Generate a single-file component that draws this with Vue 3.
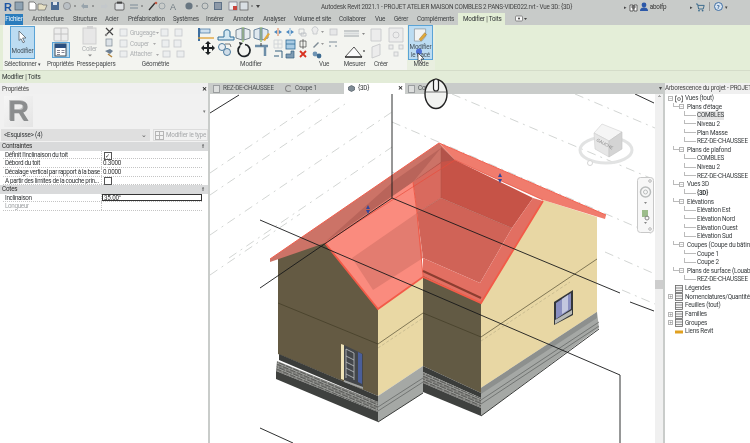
<template>
  <div class="app">
    <!-- Title bar -->
    <div class="titlebar">
      <svg class="qat" width="270" height="13" viewBox="0 0 270 13">
        <text x="4" y="10.500" class="logo">R</text>
        <rect x="15" y="2" width="8" height="8" fill="#8fa3b3" stroke="#4c5a66" stroke-width=".7" />
        <path d="M29 2h5l2 2v6h-7z" fill="#fff" stroke="#555" stroke-width=".7" />
        <path d="M38 4h4l1 1h4l-2 5h-7z" fill="#e6e0c4" stroke="#666" stroke-width=".7" />
        <rect x="51" y="2" width="8" height="8" fill="#4a6a92" />
        <rect x="53" y="2" width="4" height="3" fill="#dfe6ee" />
        <circle cx="67" cy="6" r="3.600" fill="#b9bfc4" stroke="#777" stroke-width=".6" />
        <circle cx="75" cy="6" r=".8" fill="#555" />
        <path d="M81 6l3-3v2h4v3h-4v1z" fill="#98a4ac" />
        <path d="M108 6l-3-3v2h-4v3h4v1z" fill="#c4c8cb" />
        <circle cx="93" cy="6" r=".8" fill="#555" />
        <rect x="115" y="3" width="9" height="7" rx="1" fill="#dfe2e4" stroke="#444" stroke-width=".8" />
        <rect x="117" y="1.600" width="5" height="2" fill="#444" />
        <path d="M130 5h8M130 8h8" stroke="#7d8c98" stroke-width="1.200" />
        <circle cx="142" cy="6" r=".8" fill="#555" />
        <path d="M149 10l6-7" stroke="#333" stroke-width="1.300" />
        <circle cx="156" cy="3" r="1.300" fill="#c25a45" />
        <circle cx="162" cy="6" r="3" fill="none" stroke="#9aa3a8" />
        <text x="170" y="10" class="a-glyph">A</text>
        <circle cx="189" cy="6" r="3.600" fill="#687681" />
        <circle cx="197" cy="6" r=".8" fill="#555" />
        <circle cx="205" cy="6" r="3" fill="none" stroke="#8b9499" />
        <rect x="214" y="2" width="8" height="8" fill="#5e7187" />
        <path d="M215 4h6M215 6h6M215 8h6" stroke="#e5e5e5" stroke-width=".7" />
        <rect x="229" y="2" width="8" height="8" fill="#edf0f2" stroke="#667" stroke-width=".6" />
        <rect x="233" y="6" width="4" height="4" fill="#c9453c" />
        <rect x="240" y="2" width="8" height="8" fill="#d9dfe4" stroke="#555" stroke-width=".7" />
        <circle cx="252" cy="6" r=".8" fill="#555" />
        <path d="M256 5h4l-2 3z" fill="#444" />
      </svg>
      <span class="doc-title">Autodesk Revit 2021.1 - PROJET ATELIER MAISON COMBLES 2 PANS-VIDE022.rvt - Vue 3D: {3D}</span>
      <div class="account">
        <span class="dot-arrow">▸</span>
        <svg width="9" height="10" viewBox="0 0 9 10"><path d="M1 3h3v6H1zM5 3h3v6H5zM3 4h3v2H3z" fill="#fff" stroke="#444" stroke-width=".8" /></svg>
        <svg width="8" height="10" viewBox="0 0 8 10"><circle cx="4" cy="3" r="2.400" fill="#2c58a8" /><path d="M0 9c0-3 2-3.600 4-3.600S8 6 8 9z" fill="#2c58a8" /></svg>
        <span class="user">abolfp</span>
        <span class="dot-arrow">▸</span>
        <svg width="10" height="10" viewBox="0 0 10 10"><path d="M1 2h1.600l1 5h4.600l1-3.600H3" fill="none" stroke="#3f6d8e" stroke-width="1" /><circle cx="4" cy="8.600" r=".9" fill="#3f6d8e" /><circle cx="7.600" cy="8.600" r=".9" fill="#3f6d8e" /></svg>
        <span class="sep"></span>
        <span class="help">?</span>
        <span class="dot-arrow">▾</span>
      </div>
    </div>

    <!-- Ribbon tabs -->
    <div class="tabs">
      <div
        v-for="tab in ribbonTabs"
        :key="tab.label"
        :class="['tab', tab.cls]"
        :style="{ width: tab.w + 'px' }"
      >{{ tab.label }}</div>
      <svg class="tab-extra" width="12" height="8" viewBox="0 0 12 8"><rect x="0.5" y="1" width="7" height="5" rx="1" fill="#f6f6f6" stroke="#666" stroke-width=".7" /><circle cx="4" cy="3.500" r="1" fill="#444" /><path d="M9 3h3l-1.500 2z" fill="#444" /></svg>
    </div>

    <!-- Ribbon -->
    <div class="ribbon">
      <div class="group g-select">
        <div class="group-body">
          <div class="big-active select-btn">
            <svg width="12" height="14" viewBox="0 0 12 14"><path d="M2 1l7 7H5.600l2 4-1.600.8-2-4L2 10.500z" fill="#fff" stroke="#55606a" stroke-width=".8" /></svg>
            <span>Modifier</span>
          </div>
        </div>
        <div class="group-label">Sélectionner <small>▾</small></div>
      </div>
      <div class="group g-props">
        <div class="group-body props-body">
          <svg width="16" height="15" viewBox="0 0 16 15"><rect x="1" y="1" width="14" height="13" rx="1" fill="#ededed" stroke="#c2c2c2" /><path d="M1 7h14M8 1v13" stroke="#c2c2c2" /></svg>
          <div class="props-active">
            <svg width="13" height="14" viewBox="0 0 13 14"><rect x="1" y="1" width="11" height="12" fill="#fff" stroke="#3c4a56" /><rect x="1" y="1" width="11" height="4" fill="#2a4f80" /><path d="M3 7.500h3M3 9.500h3M3 11.500h3M7.500 7.500h3M7.500 9.500h3" stroke="#667" stroke-width=".8" /></svg>
          </div>
        </div>
        <div class="group-label">Propriétés</div>
      </div>
      <div class="group g-clip">
        <div class="group-body">
          <svg width="42" height="35" viewBox="75 25 42 35">
            <rect x="83" y="28" width="13" height="16" fill="#e7e7e7" stroke="#cfcfcf" />
            <rect x="87" y="26" width="6" height="3" fill="#d3d3d3" />
            <text x="82" y="50.500" class="dim">Coller</text>
            <path d="M88 54.500h4l-2 2z" fill="#888" />
            <path d="M106 28l7 7M113 28l-7 7" stroke="#444" stroke-width="1.200" />
            <circle cx="106" cy="35" r="1.200" fill="#8a8a8a" />
            <rect x="106" y="39" width="6" height="7" fill="#dde3e8" stroke="#7b8792" stroke-width=".7" />
            <path d="M105 51l5 3 3-3-3-2z" fill="#6c7f93" />
            <path d="M108 54l4 3" stroke="#b5873f" stroke-width="1.500" />
          </svg>
        </div>
        <div class="group-label">Presse-papiers</div>
      </div>
      <div class="group g-geo">
        <div class="group-body">
          <svg width="77" height="35" viewBox="117 25 77 35">
            <g stroke="#c5c9cc" fill="#eceeef" stroke-width=".8">
              <rect x="120" y="29" width="7" height="7" />
              <rect x="120" y="40" width="7" height="7" />
              <rect x="120" y="51" width="7" height="6" />
              <rect x="161" y="29" width="7" height="7" />
              <rect x="175" y="29" width="7" height="7" />
              <rect x="162" y="40" width="7" height="7" />
              <rect x="174" y="40" width="7" height="7" />
              <rect x="163" y="51" width="7" height="6" />
              <rect x="177" y="51" width="7" height="6" />
            </g>
            <text x="130" y="35" class="dim">Grugeage</text>
            <text x="130" y="45.500" class="dim">Couper</text>
            <text x="130" y="56" class="dim">Attacher</text>
            <path d="M156 32h3l-1.500 2zM153 43h3l-1.500 2zM156 54h3l-1.500 2z" fill="#aaa" />
          </svg>
        </div>
        <div class="group-label">Géométrie</div>
      </div>
      <div class="group g-mod">
        <div class="group-body">
          <svg width="114" height="35" viewBox="194 25 114 35">
            <!-- big row 1 -->
            <path d="M198 28h2v13h-2z" fill="#3f6f9f" />
            <rect x="200" y="29" width="10" height="4" fill="#cfe0ee" stroke="#3f6f9f" stroke-width=".7" />
            <path d="M198 38h16" stroke="#e0a030" stroke-width="1.300" />
            <path d="M218 40h16v-3h-4v-5c0-3-6-3-6 0v5h-6z" fill="#d5e8f2" stroke="#2f6c98" stroke-width="1" />
            <path d="M243 27v15" stroke="#6aa63e" stroke-width="1" />
            <path d="M236 30l6-2v12l-6-2zM244 28l6 2v8l-6 2z" fill="#e5ebef" stroke="#5d6f7d" stroke-width=".8" />
            <path d="M261 27v15" stroke="#6aa63e" stroke-width="1" />
            <path d="M254 30l6-2v12l-6-2zM262 28l6 2v8l-6 2z" fill="#dfe8ef" stroke="#4d6c8a" stroke-width=".8" />
            <path d="M263 40l5-7 2 1-5 7z" fill="#e4a93a" />
            <!-- big row 2 -->
            <path d="M205 44l3-3 3 3h-2v3h3v-2l3 3-3 3v-2h-3v3h2l-3 3-3-3h2v-3h-3v2l-3-3 3-3v2h3v-3z" fill="#1d2124" />
            <circle cx="222" cy="47" r="3.500" fill="#e8eef2" stroke="#3b6e95" stroke-width=".9" />
            <circle cx="227" cy="52" r="3.500" fill="#cfdde8" stroke="#3b6e95" stroke-width=".9" />
            <path d="M225 44h5l1 3" fill="none" stroke="#444" stroke-width=".7" />
            <path d="M245 44.500a6 6 0 1 1-5 1.500" fill="none" stroke="#1e2326" stroke-width="1.700" />
            <path d="M239 42l4 1-3 3z" fill="#1e2326" />
            <path d="M255 46h13M265 46v10" stroke="#6d8ea8" stroke-width="2.500" />
            <path d="M261 43v3" stroke="#555" stroke-width="1.200" />
            <!-- small -->
            <path d="M274 32l3-2v4zM282 32l-3-2v4z" fill="#4c8ac0" />
            <path d="M278 28v8" stroke="#d5652e" stroke-width=".8" />
            <path d="M286 32l3-2v4zM294 32l-3-2v4z" fill="#4c8ac0" />
            <path d="M290 28v8" stroke="#5b9bd0" stroke-width=".8" />
            <path d="M299 29h5v5h-5zM301 33h5v3h-5z" fill="none" stroke="#b8bdc1" stroke-width=".8" />
            <path d="M274 40h8v8h-8zM274 44h8M278 40v8" fill="none" stroke="#cfd3d6" stroke-width=".9" />
            <rect x="286" y="40" width="9" height="9" fill="#a9cbe3" stroke="#2f6c98" stroke-width=".8" />
            <path d="M286 44h9" stroke="#2f6c98" stroke-width=".8" />
            <path d="M300 41h6v6h-6zM303 39v10" fill="none" stroke="#444" stroke-width=".7" />
            <path d="M275 51h7v7M274 56h5" fill="none" stroke="#35607f" stroke-width="1" />
            <path d="M286 58h8v-7h-3v3h-5z" fill="#7d9ab2" stroke="#35607f" stroke-width=".7" />
            <path d="M300 51l6 6M306 51l-6 6" stroke="#d8311f" stroke-width="1.800" />
          </svg>
        </div>
        <div class="group-label">Modifier</div>
      </div>
      <div class="group g-vue">
        <div class="group-body">
          <svg width="32" height="35" viewBox="308 25 32 35">
            <path d="M313 32a3 3 0 1 1 4 0v2h-4z" fill="#ececec" stroke="#c2c5c8" stroke-width=".8" />
            <path d="M321 31h3l-1.500 2z" fill="#999" />
            <rect x="330" y="29" width="7" height="6" fill="#e6e7e8" stroke="#c3c6c8" stroke-width=".8" />
            <path d="M313 47l5-5 1 1-5 5z" fill="#7f8b95" />
            <path d="M321 43h3l-1.500 2z" fill="#999" />
            <path d="M329 42h8M330 45v2M336 45v2" stroke="#7d8c99" stroke-width="1" />
            <circle cx="315" cy="54" r="2.400" fill="#6e93b3" />
            <circle cx="319" cy="56" r="2.400" fill="#3c6a90" />
          </svg>
        </div>
        <div class="group-label">Vue</div>
      </div>
      <div class="group g-measure">
        <div class="group-body">
          <svg width="29" height="35" viewBox="340 25 29 35">
            <path d="M344 31h15M344 36h15" stroke="#9ca3a8" stroke-width="1" />
            <rect x="344" y="32.500" width="15" height="2" fill="#d6d9db" />
            <path d="M362 33h3l-1.500 2z" fill="#888" />
            <path d="M345 57l9-10 8 10z" fill="#fbfbfb" stroke="#444" stroke-width=".9" />
            <path d="M345 57h17" stroke="#222" stroke-width="1.200" />
            <circle cx="364" cy="51" r=".9" fill="#555" />
          </svg>
        </div>
        <div class="group-label">Mesurer</div>
      </div>
      <div class="group g-create">
        <div class="group-body">
          <svg width="38" height="35" viewBox="369 25 38 35">
            <g fill="#ececec" stroke="#c8cacc" stroke-width=".9">
              <path d="M371 29h10v12h-10z" />
              <path d="M389 28h14v14h-14z" />
              <circle cx="396" cy="35" r="3" />
              <path d="M372 47l8-3v11l-8 3z" />
              <rect x="389" y="45" width="4" height="4" />
              <rect x="399" y="45" width="4" height="4" />
              <rect x="394" y="52" width="4" height="4" />
            </g>
          </svg>
        </div>
        <div class="group-label">Créer</div>
      </div>
      <div class="group g-mode">
        <div class="group-body">
          <div class="big-active mode-btn">
            <svg width="15" height="15" viewBox="0 0 15 15"><path d="M1 1h12v8l-4 5H1z" fill="#f1f3f4" stroke="#8e969c" stroke-width=".8" /><path d="M6 12l6-7 2 2-6 7z" fill="#e0a838" stroke="#7c5a1e" stroke-width=".4" /></svg>
            <span>Modifier<br />le tracé</span>
          </div>
        </div>
        <div class="group-label">Mode</div>
      </div>
      <svg class="cursor" width="12" height="16" viewBox="0 0 12 16">
        <circle cx="4" cy="3.500" r="3" fill="#3d5fd0" opacity=".85" />
        <path d="M3 5l6 6H6l1.500 4-1.500.6L4.500 12 3 13.500z" fill="#fff" stroke="#333" stroke-width=".7" />
      </svg>
    </div>

    <div class="context-line">Modifier | Toits</div>

    <div class="main">
      <!-- Properties palette -->
      <div class="props">
        <div class="panel-title"><span>Propriétés</span><b>✕</b></div>
        <div class="type-box">
          <div class="type-logo">R</div>
          <span class="type-arrow">▾</span>
        </div>
        <div class="type-row">
          <div class="combo"><span>&lt;Esquisse&gt; (4)</span><span class="combo-arrow">⌄</span></div>
          <div class="edit-type">
            <svg width="9" height="9" viewBox="0 0 9 9"><rect x=".5" y=".5" width="8" height="8" fill="none" stroke="#b5b5b5" /><path d="M.5 4.500h8M4.500 .5v8" stroke="#b5b5b5" /></svg>
            <span>Modifier le type</span>
          </div>
        </div>
        <template v-for="sec in propSections" :key="sec.title">
          <div class="prop-section"><span>{{ sec.title }}</span><span class="collapse">⇑</span></div>
          <div v-for="row in sec.rows" :key="row.name" :class="['prop-row', { off: row.off }]">
            <div class="prop-name">{{ row.name }}</div>
            <div :class="['prop-val', { editing: row.editing }]">
              <span v-if="row.check !== undefined" class="check">{{ row.check ? '✓' : '' }}</span>
              <template v-else>{{ row.value }}</template>
            </div>
          </div>
        </template>
      </div>

      <!-- View area -->
      <div class="center">
        <div class="view-tabs">
          <div class="view-tab"><i class="doc-ico"></i>REZ-DE-CHAUSSEE</div>
          <div class="view-tab coupe"><i class="sec-ico"></i>Coupe 1</div>
          <div class="view-tab active">
            <svg width="7" height="7" viewBox="0 0 7 7"><path d="M3.500 .5l3 1.500v3l-3 1.500-3-1.500v-3z" fill="#7f8c96" stroke="#3f4a52" stroke-width=".6" /></svg>
            <span>{3D}</span><b>✕</b>
          </div>
          <div class="view-tab"><i class="doc-ico"></i>Coupe 2</div>
          <div class="tabs-end">▾</div>
        </div>
        <div class="view-row">
          <svg class="canvas" width="445" height="349" viewBox="210 94 445 349">
            <defs>
              <pattern id="brick" width="7" height="5" patternUnits="userSpaceOnUse" patternTransform="skewY(23)">
                <rect width="7" height="5" fill="#5b5c59" />
                <path d="M0 .5h7M0 3h7M2 .5V3M5.500 3V5" stroke="#c9cac6" stroke-width=".55" fill="none" />
              </pattern>
            </defs>

            <!-- reference planes -->
            <g class="grid">
              <path d="M210 173L320 99" />
              <path d="M210 195L345 104" />
              <path d="M210 235L392 112" />
              <path d="M229 258L392 147" />
              <path d="M392 122L655 235" />
              <path d="M392 172L440 192" />
              <path d="M452 94L655 180" />
              <path d="M575 94L655 128" />
              <path d="M210 275L300 214" />
              <path d="M605 252L655 274" />
              <path d="M622 290L655 304" />
            </g>

            <!-- left wall -->
            <polygon points="278,258 325,242 378,309 378,345 378,396 278,354" fill="#645a43" />
            <!-- middle wall -->
            <polygon points="378,309 423,278 423,366 378,396" fill="#e9d8a4" />
            <!-- rear wall -->
            <polygon points="423,272 481,302 481,393 423,366" fill="#625a44" />
            <!-- right wall -->
            <polygon points="481,302 543,200 597,217 597,312 481,388" fill="#e8d7a4" />

            <!-- plinth, gable side -->
            <polygon points="279,354 378,396 378,402 279,360" fill="#3a3c3a" />
            <polygon points="277,361 378,402 378,412 276,371" fill="url(#brick)" />
            <polygon points="276,371 378,412 378,422 276,379" fill="#3f413f" />
            <polygon points="423,366 481,393 481,398 423,372" fill="#3a3c3a" />
            <polygon points="423,372 481,398 481,408 423,383" fill="url(#brick)" />
            <polygon points="423,383 481,408 481,416 423,392" fill="#3f413f" />
            <!-- plinth, light side -->
            <polygon points="378,396 423,366 423,393 378,422" fill="#a5a8a5" />
            <path d="M378 407L423 378M378 411L423 382" stroke="#5d605e" stroke-width=".7" />
            <polygon points="481,388 597,312 599,328 481,416" fill="#a5a8a5" />
            <polygon points="481,388 597,312 597,318 481,394" fill="#8d908e" />
            <path d="M481 400L599 322M481 404L599 326" stroke="#5d605e" stroke-width=".7" />
            <path d="M378 422L423 393M481 416L599 329" stroke="#3a3c3a" stroke-width="1" />

            <!-- level lines -->
            <g class="level">
              <path d="M278 303L378 344L423 313L481 337L597 259" />
            </g>
            <path d="M378 348L423 318M481 341L570 282" class="level-dash" />

            <!-- door -->
            <polygon points="341,344 344,345 344,380 341,379" fill="#efe3b8" />
            <polygon points="344,345 363,354 363,387 344,380" fill="#43464a" />
            <polygon points="358,352 362,354 362,384 358,382" fill="#4a5e9a" />
            <path d="M346 349l8 4v27M346 356l8 4M346 362l8 4M346 368l8 4M346 374l8 4M346 349v29" stroke="#cfd1d2" stroke-width=".7" fill="none" />
            <polygon points="344,380 363,387 363,389 344,382" fill="#a2a5a5" />

            <!-- window -->
            <polygon points="554,302 573,290 573,315 554,325" fill="#34373a" />
            <polygon points="556,303 571,293 571,309 556,319" fill="#8a8fc0" />
            <polygon points="562,299 568,295 568,310 562,314" fill="#c3c7df" />
            <polygon points="555,320 572,310 572,314 555,324" fill="#b7b9b6" />

            <!-- roof -->
            <polygon points="439,143 270,259 270,262 325,243 455,160" fill="#cc7367" />
            <polygon points="439,143 606,215 605,219 543,200 455,160" fill="#f07c6d" />
            <polygon points="441,148 395,180 325,242 413,182" fill="#b9645a" />
            <polygon points="441,147 455,160 414,181 441,162" fill="#b3534a" />
            <polygon points="441,162 455,160 533,198 512,228 441,198" fill="#c65347" />
            <polygon points="413,182 441,163 441,198 417,213" fill="#d96a5e" />
            <polygon points="441,198 512,228 480,283 423,258 417,213" fill="#d06357" />
            <polygon points="533,198 543,201 481,303 423,276 423,258 480,283 512,228" fill="#e26f62" />
            <polygon points="413,182 325,243 373,302 378,309 423,277 417,213" fill="#fa8b7e" />
            <polygon points="417,213 352,258 373,290 423,258" fill="#e37c70" />
            <path d="M325 243L378 309L423 277L481 303L543 201" fill="none" stroke="#f25b48" stroke-width="1.800" />
            <path d="M413 182L417 213L423 276" fill="none" stroke="#ee5a48" stroke-width="1" />
            <path d="M270 259L439 143L606 215" fill="none" stroke="#f0604f" stroke-width="1" />
            <path d="M325 243L455 160L543 200" fill="none" stroke="#e84c3b" stroke-width=".7" />
            <path d="M423 271L481 298" stroke="#8c3d30" stroke-width="2" />
            <path d="M441 148v50l71 30M441 198l-24 15" stroke="#a85449" stroke-width=".5" fill="none" />

            <!-- black scope lines -->
            <g class="scope">
              <path d="M392 94V198L620 293" />
              <path d="M260 288L392 198" />
              <path d="M260 220L620 375V443" />
              <path d="M210 113L239 95" />
              <path d="M635 94L654 103" />
              <path d="M630 302L654 311" />
              <path d="M260 428L293 443" />
            </g>

            <!-- shape handles -->
            <path d="M368 205l-2 4h4zM368 214l-2-4h4zM500 173l-2 4h4zM500 183l-2-4h4z" fill="#33469a" />

            <!-- view cube -->
            <ellipse cx="606" cy="150" rx="26" ry="13" fill="none" stroke="#e2e3e3" stroke-width="3" />
            <polygon points="602,124 622,132 609,141 594,133" fill="#f5f5f5" stroke="#d0d0d0" stroke-width=".6" />
            <polygon points="594,133 609,141 609,157 595,149" fill="#e6e6e6" stroke="#cfcfcf" stroke-width=".6" />
            <polygon points="609,141 622,132 622,149 609,157" fill="#d4d4d4" stroke="#c2c2c2" stroke-width=".6" />
            <text x="596" y="141" class="cube-text" transform="rotate(28 596 141)">GAUCHE</text>
            <circle cx="590" cy="163" r="2.500" fill="#fff" stroke="#d5d5d5" />

            <!-- nav bar -->
            <rect x="637.500" y="177.500" width="16" height="55" rx="3" fill="#f7f7f7" stroke="#c8c8c8" />
            <circle cx="645.500" cy="192" r="5" fill="none" stroke="#b9bcbc" stroke-width="1.500" />
            <circle cx="645.500" cy="192" r="2" fill="none" stroke="#b9bcbc" />
            <path d="M644 202h3l-1.500 2z" fill="#888" />
            <rect x="642" y="210" width="6" height="7" fill="#9dbd8c" />
            <circle cx="647" cy="218" r="2" fill="none" stroke="#8a8a8a" />
            <path d="M644 222h3l-1.500 2z" fill="#888" />
            <circle cx="650" cy="229" r="1.300" fill="none" stroke="#b8b8b8" />
            <circle cx="650" cy="181" r="1.300" fill="none" stroke="#b8b8b8" />
          </svg>
          <div class="scroll">
            <span class="scroll-up">⌃</span>
            <div class="scroll-thumb"></div>
          </div>
        </div>
      </div>

      <!-- Project browser -->
      <div class="browser">
        <div class="browser-title">Arborescence du projet - PROJET</div>
        <div class="tree">
          <div
            v-for="(node, i) in treeNodes"
            :key="i"
            :class="['node', 'lvl' + node.lvl, { sel: node.sel, bold: node.bold }]"
          >
            <i v-if="node.box" class="box">{{ node.box }}</i>
            <i v-if="node.lvl > 0" class="branch"></i>
            <svg v-if="node.ico" width="8" height="8" viewBox="0 0 8 8" class="node-ico">
              <path v-if="node.ico === 'link'" d="M0 4h8" stroke="#e0a020" stroke-width="3" />
              <path v-else-if="node.ico === 'views'" d="M2 1H.5v6H2M6 1h1.500v6H6" fill="none" stroke="#555" stroke-width=".8" />
              <g v-else>
                <rect x=".5" y=".5" width="7" height="7" fill="#f2f2f2" stroke="#666" stroke-width=".8" />
                <path d="M.5 3h7M.5 5.500h7" stroke="#666" stroke-width=".7" />
              </g>
              <circle v-if="node.ico === 'views'" cx="4" cy="4" r="1.500" fill="none" stroke="#555" stroke-width=".7" />
            </svg>
            <span>{{ node.label }}</span>
          </div>
        </div>
      </div>

      <!-- mouse hint, overlay -->
      <svg class="mouse" width="26" height="33" viewBox="0 0 26 33">
        <ellipse cx="13" cy="17" rx="11" ry="14.500" fill="#f1f2f0" stroke="#222" stroke-width="1.400" />
        <path d="M2.500 15h21" stroke="#555" stroke-width=".8" />
        <rect x="10.500" y="2" width="5" height="12" rx="2.500" fill="#f7f7f7" stroke="#222" stroke-width="1.200" />
      </svg>
    </div>
  </div>
</template>

<script setup>
const ribbonTabs = [
  { label: 'Fichier', w: 18, cls: 'file' },
  { label: 'Architecture', w: 41 },
  { label: 'Structure', w: 32 },
  { label: 'Acier', w: 23 },
  { label: 'Préfabrication', w: 45 },
  { label: 'Systèmes', w: 33 },
  { label: 'Insérer', w: 27 },
  { label: 'Annoter', w: 30 },
  { label: 'Analyser', w: 31 },
  { label: 'Volume et site', w: 45 },
  { label: 'Collaborer', w: 36 },
  { label: 'Vue', w: 19 },
  { label: 'Gérer', w: 23 },
  { label: 'Compléments', w: 41 },
  { label: 'Modifier | Toits', w: 47, cls: 'current' }
]

const propSections = [
  {
    title: 'Contraintes',
    rows: [
      { name: "Définit l'inclinaison du toit", check: true },
      { name: 'Débord du toit', value: '0.3000' },
      { name: 'Décalage vertical par rapport à la base', value: '0.0000' },
      { name: 'A partir des limites de la couche prin...', check: false }
    ]
  },
  {
    title: 'Cotes',
    rows: [
      { name: 'Inclinaison', value: '35.00°', editing: true },
      { name: 'Longueur', value: '', off: true }
    ]
  }
]

const treeNodes = [
  { label: 'Vues (tout)', lvl: 0, box: '−', ico: 'views' },
  { label: "Plans d'étage", lvl: 1, box: '−' },
  { label: 'COMBLES', lvl: 2, sel: true },
  { label: 'Niveau 2', lvl: 2 },
  { label: 'Plan Masse', lvl: 2 },
  { label: 'REZ-DE-CHAUSSEE', lvl: 2 },
  { label: 'Plans de plafond', lvl: 1, box: '−' },
  { label: 'COMBLES', lvl: 2 },
  { label: 'Niveau 2', lvl: 2 },
  { label: 'REZ-DE-CHAUSSEE', lvl: 2 },
  { label: 'Vues 3D', lvl: 1, box: '−' },
  { label: '{3D}', lvl: 2, bold: true },
  { label: 'Elévations', lvl: 1, box: '−' },
  { label: 'Elévation Est', lvl: 2 },
  { label: 'Elévation Nord', lvl: 2 },
  { label: 'Elévation Ouest', lvl: 2 },
  { label: 'Elévation Sud', lvl: 2 },
  { label: 'Coupes (Coupe du bâtiment)', lvl: 1, box: '−' },
  { label: 'Coupe 1', lvl: 2 },
  { label: 'Coupe 2', lvl: 2 },
  { label: 'Plans de surface (Louables)', lvl: 1, box: '−' },
  { label: 'REZ-DE-CHAUSSEE', lvl: 2 },
  { label: 'Légendes', lvl: 0, ico: 'sheet' },
  { label: 'Nomenclatures/Quantités', lvl: 0, box: '+', ico: 'sheet' },
  { label: 'Feuilles (tout)', lvl: 0, ico: 'sheet' },
  { label: 'Familles', lvl: 0, box: '+', ico: 'sheet' },
  { label: 'Groupes', lvl: 0, box: '+', ico: 'sheet' },
  { label: 'Liens Revit', lvl: 0, ico: 'link' }
]
</script>

<style>
html, body { margin: 0; background: #fff; }
</style>

<style scoped>
.app {
  width: 750px;
  height: 443px;
  display: flex;
  flex-direction: column;
  overflow: hidden;
  background: #fff;
  font-family: Roboto, "Liberation Sans", sans-serif;
  font-size: 6.3px;
  letter-spacing: -0.2px;
  color: #2f3234;
  filter: blur(0.45px);
}

/* Title bar */
.titlebar {
  height: 13px;
  flex: none;
  display: flex;
  align-items: center;
  background: #c8cbc9;
}
.qat { flex: none; }
.logo { font: bold 11px "Liberation Sans", sans-serif; fill: #1f57a4; }
.a-glyph { font: 9px "Liberation Sans", sans-serif; fill: #6f7a80; }
.doc-title {
  margin-left: 51px;
  width: 254px;
  flex: none;
  white-space: nowrap;
  color: #444;
}
.account {
  margin-left: 49px;
  display: flex;
  align-items: center;
  gap: 2px;
  flex: 1;
}
.dot-arrow { font-size: 5px; color: #444; }
.user { color: #333; width: 38px; }
.sep { width: 1px; height: 9px; background: #999; margin: 0 2px; }
.help {
  width: 9px;
  height: 9px;
  border-radius: 50%;
  background: #d7e4f0;
  border: 1px solid #3e6da3;
  box-sizing: border-box;
  color: #2c5b94;
  font-size: 6px;
  line-height: 7px;
  text-align: center;
  font-weight: bold;
}

/* Ribbon tabs */
.tabs {
  height: 12px;
  flex: none;
  display: flex;
  align-items: stretch;
  padding-left: 5px;
  background: #c8cbc9;
  color: #3c3f41;
  line-height: 12px;
}
.tab {
  white-space: nowrap;
  flex: none;
}
.tab.file {
  background: #2a7cbd;
  color: #eef6fb;
  text-align: center;
  margin-right: 9px;
  margin-top: 1px;
  line-height: 11px;
}
.tab.current {
  background: #e3eed6;
  color: #2f3234;
  padding-left: 5px;
  box-sizing: border-box;
}
.tab-extra { margin: 2px 0 0 10px; }

/* Ribbon */
.ribbon {
  height: 45px;
  flex: none;
  display: flex;
  padding-left: 3px;
  background: #e4eed8;
  position: relative;
  box-sizing: border-box;
}
.group {
  flex: none;
  display: flex;
  flex-direction: column;
  background: #f3f4f0;
  box-sizing: border-box;
}
.group-body {
  height: 35px;
  flex: none;
  display: flex;
  overflow: hidden;
}
.group-label {
  flex: 1;
  text-align: center;
  line-height: 9px;
  white-space: nowrap;
  color: #474a4c;
}
.group-label small { font-size: 5px; }
.g-select { width: 43px; }
.g-select .group-label { padding-right: 4px; }
.g-props { width: 29px; }
.g-clip { width: 42px; }
.g-geo { width: 77px; }
.g-mod { width: 114px; }
.g-vue { width: 32px; }
.g-measure { width: 29px; }
.g-create { width: 38px; }
.g-create .group-label { padding-right: 14px; }
.g-mode { width: 28px; background: #e9efe0; }
.big-active {
  background: #bcdcf2;
  border: 1px solid #5aa3d6;
  box-sizing: border-box;
  display: flex;
  flex-direction: column;
  align-items: center;
  text-align: center;
  line-height: 7.5px;
  color: #414e58;
}
.select-btn {
  width: 25px;
  height: 33px;
  margin: 1px 0 0 7px;
  padding-top: 3px;
  gap: 4px;
}
.mode-btn {
  width: 25px;
  height: 35px;
  margin-left: 1px;
  padding-top: 2px;
  gap: 2px;
}
.props-body {
  flex-direction: column;
  align-items: center;
  padding-top: 2px;
  box-sizing: border-box;
}
.props-active {
  width: 18px;
  height: 16px;
  background: #b7d9f0;
  border: 1px solid #5aa3d6;
  box-sizing: border-box;
  display: flex;
  align-items: center;
  justify-content: center;
}
.dim { font-size: 6.3px; fill: #adb0b2; font-family: Roboto, sans-serif; }
.cursor { position: absolute; left: 415px; top: 23px; }

.context-line {
  height: 13px;
  flex: none;
  line-height: 13px;
  padding-left: 2px;
  background: #e3ecd8;
  border-top: 1px solid #d4dcc9;
  box-sizing: border-box;
  color: #2f3234;
}

/* Main */
.main {
  flex: 1;
  display: flex;
  min-height: 0;
  position: relative;
}
.mouse { position: absolute; left: 423px; top: -6px; }

/* Properties */
.props {
  width: 208px;
  flex: none;
  background: #fff;
  border-right: 2px solid #c9ccca;
}
.panel-title {
  height: 11px;
  display: flex;
  justify-content: space-between;
  align-items: center;
  padding: 0 1px 0 2px;
  background: #f0f0f0;
  color: #444;
}
.panel-title b { color: #222; }
.type-box {
  height: 34px;
  display: flex;
  justify-content: space-between;
  align-items: center;
  background: #f1f1f1;
  padding-right: 2px;
}
.type-logo {
  width: 29px;
  height: 31px;
  margin-left: 4px;
  background: linear-gradient(135deg, #f6f6f6, #e4e4e4);
  color: #8b8d8e;
  font: bold 29px/31px "Liberation Sans", sans-serif;
  text-align: center;
  text-shadow: -1px -1px 0 #b9baba;
}
.type-arrow { color: #777; font-size: 5px; }
.type-row {
  height: 14px;
  display: flex;
  gap: 3px;
  background: #f1f1f1;
  align-items: center;
}
.combo {
  width: 149px;
  height: 12px;
  margin-left: 1px;
  background: #dfdfdf;
  display: flex;
  justify-content: space-between;
  align-items: center;
  padding: 0 3px;
  box-sizing: border-box;
}
.combo-arrow { font-size: 7px; line-height: 6px; color: #555; }
.edit-type {
  flex: 1;
  display: flex;
  align-items: center;
  gap: 2px;
  color: #a6a8aa;
  border: 1px solid #dcdcdc;
  height: 12px;
  box-sizing: border-box;
  white-space: nowrap;
  padding-left: 1px;
}
.prop-section {
  height: 8.5px;
  line-height: 8.5px;
  background: #d9dadb;
  display: flex;
  justify-content: space-between;
  padding: 0 3px 0 2px;
  color: #2b2b2b;
}
.collapse { font-size: 5px; }
.prop-row {
  height: 8.7px;
  line-height: 8.7px;
  display: flex;
  margin-left: 3px;
  margin-right: 6px;
  border-bottom: 1px dotted #c4c4c4;
  box-sizing: border-box;
  white-space: nowrap;
}
.prop-name {
  width: 99px;
  flex: none;
  padding-left: 2px;
  box-sizing: border-box;
  border-right: 1px dotted #c4c4c4;
  overflow: hidden;
  color: #2f3234;
  letter-spacing: -0.32px;
}
.prop-val { flex: 1; padding-left: 1px; color: #333; }
.prop-val.editing { border: 1px solid #333; line-height: 6.5px; }
.prop-row.off .prop-name { color: #a0a3a5; }
.check {
  display: inline-block;
  width: 6px;
  height: 6px;
  border: 1px solid #555;
  margin-left: 1px;
  line-height: 6px;
  vertical-align: -1px;
}

/* View */
.center {
  width: 455px;
  flex: none;
  display: flex;
  flex-direction: column;
}
.view-tabs {
  height: 11px;
  flex: none;
  display: flex;
  background: #c9ccca;
  color: #4c5052;
  line-height: 11px;
}
.view-tab {
  display: flex;
  align-items: center;
  gap: 3px;
  padding-left: 3px;
  width: 72px;
  box-sizing: border-box;
  flex: none;
  white-space: nowrap;
  overflow: hidden;
}
.view-tab.coupe { width: 62px; }
.view-tab.active {
  width: 61px;
  background: #fff;
  color: #2f3234;
  padding-left: 4px;
}
.view-tab.active b { margin-left: auto; margin-right: 2px; color: #222; }
.doc-ico {
  width: 5px;
  height: 6px;
  border: 1px solid #9a9d9f;
  background: #dcdedd;
  flex: none;
}
.sec-ico {
  width: 5px;
  height: 5px;
  border: 1px solid #888;
  border-radius: 50%;
  border-right-color: transparent;
  flex: none;
}
.tabs-end { margin-left: auto; margin-right: 3px; color: #444; }
.view-row { flex: 1; display: flex; min-height: 0; }
.canvas { flex: none; display: block; }
.grid path {
  stroke: #cdd0ce;
  stroke-width: 0.9;
  fill: none;
  stroke-dasharray: 9 5 2 5;
}
.level path { stroke: #3a3520; stroke-width: 0.6; fill: none; }
.level-dash { stroke: #bdb28a; stroke-width: 0.7; stroke-dasharray: 3 2; fill: none; }
.scope path { stroke: #17181a; stroke-width: 0.9; fill: none; }
.cube-text { font-size: 4.5px; fill: #8a8a8a; font-family: "Liberation Sans", sans-serif; }
.scroll {
  width: 10px;
  flex: none;
  background: #f0f0f0;
  border-right: 2px solid #c9ccca;
  box-sizing: border-box;
  position: relative;
  text-align: center;
  color: #333;
}
.scroll-up { line-height: 8px; display: block; }
.scroll-thumb {
  position: absolute;
  left: 0;
  right: 0;
  top: 186px;
  height: 9px;
  background: #cdcdcd;
}

/* Browser */
.browser {
  flex: 1;
  min-width: 0;
  background: #fff;
  overflow: hidden;
}
.browser-title {
  height: 11px;
  line-height: 11px;
  background: #f0f0f0;
  white-space: nowrap;
  color: #444;
  overflow: hidden;
}
.node {
  height: 8.65px;
  line-height: 8.65px;
  white-space: nowrap;
  position: relative;
  color: #363a3c;
}
.node span { display: inline-block; }
.node.lvl0 { padding-left: 20px; }
.node.lvl1 { padding-left: 22px; }
.node.lvl2 { padding-left: 32px; }
.node.sel span { background: #e4e4e4; }
.node.bold { font-weight: 700; }
.box {
  position: absolute;
  top: 1.500px;
  left: 3px;
  width: 5px;
  height: 5px;
  border: 1px solid #b5b5b5;
  box-sizing: border-box;
  font: normal 5px/3px "Liberation Sans", sans-serif;
  text-align: center;
  color: #777;
  background: #fff;
}
.lvl1 .box { left: 14px; }
.branch {
  position: absolute;
  top: 0;
  height: 4.500px;
  border-left: 1px solid #bbb;
  border-bottom: 1px solid #bbb;
  box-sizing: border-box;
}
.lvl1 .branch { left: 8px; width: 6px; }
.lvl2 .branch { left: 19px; width: 12px; }
.node-ico { position: absolute; left: 10px; top: .500px; }
</style>
